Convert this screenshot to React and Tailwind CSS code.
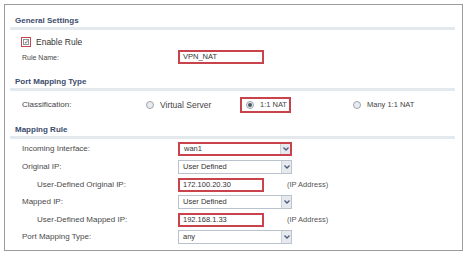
import React from 'react';

const font = { fontFamily: '"Liberation Sans", Arial, sans-serif' };

const Chevron = () => (
  <svg width="6" height="4" viewBox="0 0 6 4" className="block">
    <path d="M0.5 0.5 L3 3 L5.5 0.5" fill="none" stroke="#4b5b78" strokeWidth="1.3" />
  </svg>
);

const Select = ({ value, highlight }) => (
  <div
    className={`flex items-center w-[114px] h-[14px] bg-white ${
      highlight ? 'border-2 border-[#c9434d]' : 'border border-[#b9c2cd]'
    }`}
  >
    <span className="flex-1 pl-[4px] text-[7.5px] text-[#333] leading-none">{value}</span>
    <span className="flex items-center justify-center w-[10px] h-full bg-[#e6eaef] border-l border-[#c9d0d8]">
      <Chevron />
    </span>
  </div>
);

const TextBox = ({ value }) => (
  <div className="flex items-center w-[86px] h-[14px] border-2 border-[#c9434d] bg-white">
    <span className="pl-[3px] text-[7.5px] text-[#333] leading-none">{value}</span>
  </div>
);

const Radio = ({ checked }) => (
  <span className="flex items-center justify-center w-[8px] h-[8px] rounded-full border border-[#9ea6b0] bg-[#e9ecef]">
    {checked && <span className="w-[4px] h-[4px] rounded-full bg-[#4a5568]" />}
  </span>
);

const Header = ({ title, className }) => (
  <div className={className}>
    <div className="h-[12px] flex items-center pl-[10px] text-[8px] font-bold text-[#3c4c6c] leading-none">
      {title}
    </div>
    <div className="ml-[5px] w-[445px] h-[3px] bg-[#e4e9ee]" />
  </div>
);

const Row = ({ label, indent, h, size = 'text-[8px]', children, extra }) => (
  <div className={`flex items-center ${h}`}>
    <span
      className={`${indent ? 'pl-[32px]' : 'pl-[17px]'} w-[173px] shrink-0 ${size} text-[#4a4a4a] leading-none`}
    >
      {label}
    </span>
    {children}
    {extra && <span className="ml-[23px] text-[7.5px] text-[#555] leading-none">{extra}</span>}
  </div>
);

export default function App() {
  return (
    <div className="w-[471px] h-[257px] bg-white pt-[4px] pl-[4px]" style={font}>
      <div className="w-[459px] h-[247px] border border-[#9b9b9b] bg-white">
        <Header title="General Settings" className="pt-[10px]" />

        <div className="flex items-center h-[14px] mt-[5px] pl-[16px]">
          <span className="flex items-center justify-center w-[10px] h-[10px] border-[1.5px] border-[#c9434d]">
            <span className="flex items-center justify-center w-[6px] h-[6px] border border-[#8c96a3] bg-white text-[6px] leading-none text-[#333]">
              ✓
            </span>
          </span>
          <span className="ml-[5px] text-[8.5px] text-[#333] leading-none">Enable Rule</span>
        </div>

        <Row label="Rule Name:" h="h-[16px]" size="text-[7px]">
          <TextBox value="VPN_NAT" />
        </Row>

        <Header title="Port Mapping Type" className="mt-[11px]" />

        <div className="flex items-center h-[16px] mt-[6px]">
          <span className="pl-[17px] w-[141px] shrink-0 text-[8px] text-[#444] leading-none">Classification:</span>
          <Radio />
          <span className="ml-[6px] w-[80px] text-[8.5px] text-[#444] leading-none">Virtual Server</span>
          <div className="flex items-center w-[51px] h-[16px] border-2 border-[#c9434d] pl-[4px]">
            <Radio checked />
            <span className="ml-[6px] text-[7.5px] text-[#444] leading-none">1:1 NAT</span>
          </div>
          <span className="ml-[62px]">
            <Radio />
          </span>
          <span className="ml-[6px] text-[7.5px] text-[#444] leading-none">Many 1:1 NAT</span>
        </div>

        <Header title="Mapping Rule" className="mt-[11px]" />

        <div className="mt-[1px]">
          <Row label="Incoming Interface:" h="h-[18px]">
            <Select value="wan1" highlight />
          </Row>
          <Row label="Original IP:" h="h-[18px]">
            <Select value="User Defined" />
          </Row>
          <Row label="User-Defined Original IP:" indent h="h-[17px]" extra="(IP Address)">
            <TextBox value="172.100.20.30" />
          </Row>
          <Row label="Mapped IP:" h="h-[18px]">
            <Select value="User Defined" />
          </Row>
          <Row label="User-Defined Mapped IP:" indent h="h-[17px]" extra="(IP Address)">
            <TextBox value="192.168.1.33" />
          </Row>
          <Row label="Port Mapping Type:" h="h-[18px]">
            <Select value="any" />
          </Row>
        </div>
      </div>
    </div>
  );
}
